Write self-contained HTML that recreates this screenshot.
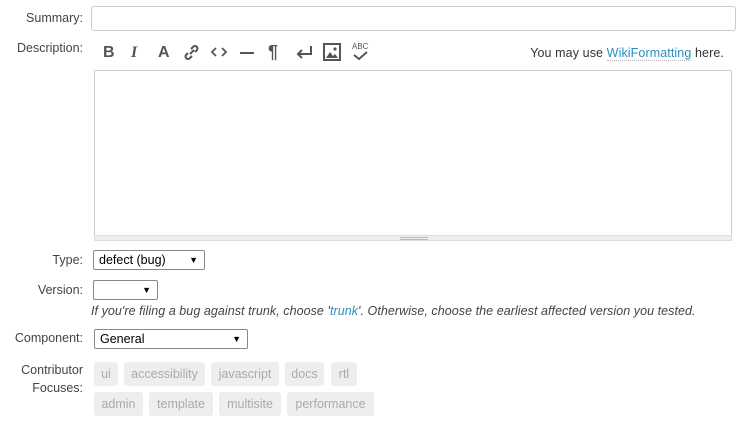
<!DOCTYPE html>
<html><head><style>
body{margin:0;width:747px;height:431px;background:#fff;font-family:"Liberation Sans",sans-serif;font-size:12.5px;color:#333;position:relative;overflow:hidden}
.a{position:absolute;white-space:nowrap}
.l{text-align:right;width:83px;left:0;color:#444}
.box{position:absolute;border:1px solid #ccc;box-sizing:border-box;background:#fff}
.sel{position:absolute;border:1px solid #888;box-sizing:border-box;border-radius:2px;background:#fff;font-size:12.5px;color:#000;padding:1px 0 0 5px;line-height:16px}
.sel:after{content:"▼";position:absolute;right:6px;top:1px;font-size:9px}
.tag{position:absolute;height:24px;line-height:24px;background:#eee;color:#aaa;border-radius:3px;text-align:center;font-size:12.5px}
.ic{position:absolute;top:44px;font-weight:bold;font-size:16px;color:#555}
</style></head><body>
<div class="a l" style="top:11px">Summary:</div>
<div class="box" style="left:91px;top:6px;width:645px;height:25px;border-radius:3px"></div>
<div class="a l" style="top:41px">Description:</div>
<span class="ic" style="left:103px">B</span>
<span class="ic" style="left:131px;font-family:'Liberation Serif',serif;font-style:italic">I</span>
<span class="ic" style="left:158px">A</span>
<svg class="a" style="left:183px;top:44px" width="17" height="17" viewBox="0 0 17 17" fill="none" stroke="#555" stroke-width="2"><path d="M7 10l4-4M5 9l-2 2a2.5 2.5 0 003.5 3.5L9 12M12 8l2-2a2.5 2.5 0 00-3.5-3.5L8 5"/></svg>
<svg class="a" style="left:210px;top:45px" width="18" height="14" viewBox="0 0 18 14" fill="none" stroke="#555" stroke-width="1.8"><path d="M6 3L2 7l4 4M12 3l4 4-4 4"/></svg>
<div class="a" style="left:240px;top:52px;width:14px;height:2px;background:#555"></div>
<span class="ic" style="left:268px;font-size:18px;top:42px">¶</span>
<svg class="a" style="left:296px;top:45px" width="18" height="14" viewBox="0 0 18 14" fill="none" stroke="#555" stroke-width="2"><path d="M15 1v8H3M6 5L2 9l4 4"/></svg>
<svg class="a" style="left:323px;top:43px" width="18" height="18" viewBox="0 0 18 18"><rect x="1" y="1" width="16" height="16" fill="none" stroke="#555" stroke-width="2"/><path d="M3 15l4-6 3 4 2-2 3 4z" fill="#555"/><circle cx="12" cy="6" r="1.6" fill="#555"/></svg>
<div class="a" style="left:352px;top:42px;font-size:8px;color:#555">ABC</div>
<svg class="a" style="left:352px;top:51px" width="16" height="10" viewBox="0 0 16 10" fill="none" stroke="#555" stroke-width="2"><path d="M2 4l5 4 8-7"/></svg>
<div class="a" style="right:23px;top:46px;color:#333;letter-spacing:0.1px">You may use <span style="color:#2a8fbd;border-bottom:1px dotted #bbb">WikiFormatting</span> here.</div>
<div class="box" style="left:94px;top:70px;width:638px;height:166px;border-color:#ccc;border-radius:2px 2px 0 0"></div>
<div class="a" style="left:94px;top:235px;width:638px;height:6px;background:#eee;border:1px solid #ddd;box-sizing:border-box"></div>
<div class="a" style="left:400px;top:237px;width:28px;height:1px;background:#bbb"></div>
<div class="a" style="left:400px;top:239px;width:28px;height:1px;background:#bbb"></div>
<div class="a l" style="top:253px">Type:</div>
<div class="sel" style="left:93px;top:250px;width:112px;height:20px">defect (bug)</div>
<div class="a l" style="top:283px">Version:</div>
<div class="sel" style="left:93px;top:280px;width:65px;height:20px"></div>
<div class="a" style="left:91px;top:304px;font-style:italic;color:#444;letter-spacing:0.06px">If you're filing a bug against trunk, choose '<span style="color:#2a8fbd">trunk</span>'. Otherwise, choose the earliest affected version you tested.</div>
<div class="a l" style="top:331px">Component:</div>
<div class="sel" style="left:94px;top:329px;width:154px;height:20px">General</div>
<div class="a l" style="top:361px;line-height:18px">Contributor<br>Focuses:</div>
<div class="tag" style="left:94px;top:362px;width:24px">ui</div>
<div class="tag" style="left:124px;top:362px;width:81px">accessibility</div>
<div class="tag" style="left:211px;top:362px;width:68px">javascript</div>
<div class="tag" style="left:285px;top:362px;width:39px">docs</div>
<div class="tag" style="left:331px;top:362px;width:26px">rtl</div>
<div class="tag" style="left:94px;top:392px;width:49px">admin</div>
<div class="tag" style="left:149px;top:392px;width:64px">template</div>
<div class="tag" style="left:219px;top:392px;width:62px">multisite</div>
<div class="tag" style="left:287px;top:392px;width:87px">performance</div>
</body></html>
